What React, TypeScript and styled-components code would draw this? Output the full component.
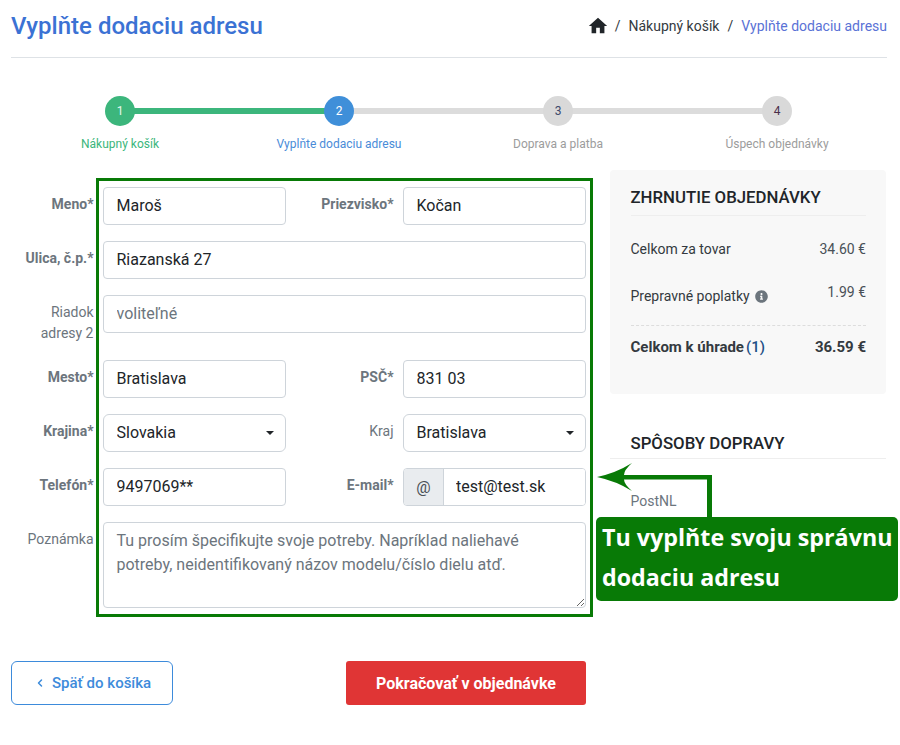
import { ChevronLeft } from 'lucide-react';
import { FaInfoCircle } from 'react-icons/fa';
import { MdHome } from 'react-icons/md';
import styled, { createGlobalStyle } from 'styled-components';

const GlobalStyle = createGlobalStyle`
  html, body {
    margin: 0;
    padding: 0;
    background: #fff;
  }
  body {
    font-family: Roboto, "Liberation Sans", sans-serif;
    color: #212529;
  }
  * {
    box-sizing: border-box;
  }
`;

const Page = styled.div`
  position: relative;
  width: 900px;
  height: 745px;
  padding: 0 13px 0 11px;
  overflow: hidden;
`;

const TopBar = styled.header`
  display: flex;
  justify-content: space-between;
  align-items: center;
  height: 58px;
  padding-bottom: 5px;
  border-bottom: 1px solid #dee2e6;
`;

const Title = styled.h1`
  margin: 0;
  font-size: 24px;
  font-weight: 500;
  color: #3b72d4;
`;

const Crumbs = styled.nav`
  display: flex;
  align-items: center;
  gap: 8px;
  font-size: 14px;
  color: #343a40;
  svg {
    width: 22px;
    height: 22px;
    margin: 0 -2px 0 -3px;
    color: #212529;
  }
`;

const CrumbCurrent = styled.span`
  color: #5a72d6;
`;

const Stepper = styled.ol`
  display: grid;
  grid-template-columns: repeat(4, 219px);
  justify-content: center;
  margin: 38px 0 0;
  padding: 0 1px 0 0;
  list-style: none;
`;

const Step = styled.li<{ $line?: string }>`
  position: relative;
  display: flex;
  flex-direction: column;
  align-items: center;
  gap: 11px;
  &::after {
    content: '';
    display: ${(p) => (p.$line ? 'block' : 'none')};
    position: absolute;
    top: 12px;
    left: 50%;
    width: 100%;
    height: 6px;
    background: ${(p) => p.$line};
  }
`;

const StepDot = styled.span<{ $bg: string; $fg: string }>`
  position: relative;
  z-index: 1;
  display: flex;
  align-items: center;
  justify-content: center;
  width: 30px;
  height: 30px;
  border-radius: 50%;
  background: ${(p) => p.$bg};
  color: ${(p) => p.$fg};
  font-size: 12px;
`;

const StepLabel = styled.span<{ $color: string }>`
  font-size: 12px;
  line-height: 14px;
  color: ${(p) => p.$color};
  white-space: nowrap;
`;

const Columns = styled.div`
  display: grid;
  grid-template-columns: 575px 276px;
  column-gap: 24px;
  margin-top: 19px;
`;

const Form = styled.form`
  display: flex;
  flex-direction: column;
  padding-top: 17px;
`;

const Row = styled.div<{ $gap?: number }>`
  display: grid;
  grid-template-columns: 92px 183px 117px 183px;
  margin-bottom: ${(p) => p.$gap ?? 16}px;
`;

const FieldLabel = styled.label<{ $strong?: boolean }>`
  padding: 7px 9.5px 0 0;
  text-align: right;
  font-size: 14px;
  line-height: 20px;
  font-weight: ${(p) => (p.$strong ? 700 : 400)};
  color: #6c757d;
`;

const TallLabel = styled(FieldLabel)`
  padding-top: 7px;
  line-height: 21px;
  height: 65px;
`;

const Input = styled.input<{ $wide?: boolean }>`
  grid-column: ${(p) => (p.$wide ? 'span 3' : 'auto')};
  width: 100%;
  height: 38px;
  padding: 0 12px 2px 12.5px;
  border: 1px solid #ced4da;
  border-radius: 4px;
  background: #fff;
  font: 400 16px Roboto, sans-serif;
  color: #212529;
  &::placeholder {
    color: #6c757d;
    opacity: 1;
  }
`;

const SelectBox = styled.div`
  position: relative;
  &::after {
    content: '';
    position: absolute;
    top: 17px;
    right: 12px;
    border-top: 4px solid #212529;
    border-left: 4px solid transparent;
    border-right: 4px solid transparent;
  }
`;

const Select = styled.select`
  width: 100%;
  height: 38px;
  padding: 0 12px 2px 12.5px;
  border: 1px solid #ced4da;
  border-radius: 6px;
  background: #fff;
  appearance: none;
  font: 400 16px Roboto, sans-serif;
  color: #212529;
`;

const InputGroup = styled.div`
  display: flex;
  height: 38px;
  border: 1px solid #ced4da;
  border-radius: 4px;
  overflow: hidden;
`;

const GroupAddon = styled.span`
  display: flex;
  align-items: center;
  justify-content: center;
  flex: 0 0 40px;
  border-right: 1px solid #ced4da;
  background: #e9ecef;
  font-size: 16px;
  color: #495057;
`;

const GroupInput = styled.input`
  flex: 1;
  min-width: 0;
  padding: 0 12px 2px;
  border: 0;
  font: 400 16px Roboto, sans-serif;
  color: #212529;
`;

const Note = styled.textarea`
  grid-column: span 3;
  display: block;
  height: 86px;
  padding: 6px 12px 6px 12.5px;
  border: 1px solid #ced4da;
  border-radius: 4px;
  font: 400 16px/24px Roboto, sans-serif;
  color: #212529;
  &::placeholder {
    color: #6c757d;
    opacity: 1;
  }
`;

const Actions = styled.div`
  display: flex;
  justify-content: space-between;
  margin-top: 53px;
`;

const BackButton = styled.button`
  display: flex;
  align-items: center;
  justify-content: flex-start;
  gap: 6px;
  width: 162px;
  height: 44px;
  padding: 0 0 0 22px;
  border: 1px solid #3d8bdb;
  border-radius: 6px;
  background: #fff;
  font: 500 15px Roboto, sans-serif;
  color: #3d8bdb;
  svg {
    width: 12px;
    height: 12px;
  }
`;

const NextButton = styled.button`
  width: 240px;
  height: 44px;
  border: 0;
  border-radius: 3px;
  background: #e03535;
  font: 700 16px Roboto, sans-serif;
  color: #fff;
`;

const Aside = styled.aside`
  display: flex;
  flex-direction: column;
`;

const SummaryCard = styled.section`
  height: 224px;
  padding: 17px 20px 0 20.5px;
  border-radius: 4px;
  background: #f8f8f8;
`;

const SummaryTitle = styled.h2`
  margin: 0;
  padding-bottom: 8px;
  border-bottom: 1px solid #eeeeee;
  font-size: 16.8px;
  line-height: 20px;
  font-weight: 500;
  color: #212529;
`;

const SummaryRow = styled.div<{ $height: number }>`
  display: flex;
  justify-content: space-between;
  height: ${(p) => p.$height}px;
  font-size: 14px;
  line-height: 20px;
  color: #343a40;
`;

const RowText = styled.span<{ $drop?: number }>`
  display: flex;
  align-items: center;
  gap: 5px;
  height: 20px;
  margin-top: ${(p) => p.$drop ?? 0}px;
  svg {
    width: 13px;
    height: 13px;
    color: #6c757d;
  }
`;

const Amount = styled.span<{ $drop?: number }>`
  margin-top: ${(p) => p.$drop ?? 0}px;
  color: #495057;
`;

const TotalRow = styled.div`
  display: flex;
  justify-content: space-between;
  padding-top: 11px;
  border-top: 1px dashed #dddddd;
  font-size: 15px;
  line-height: 20px;
  font-weight: 700;
  color: #343a40;
`;

const TotalCount = styled.span`
  margin-left: 2px;
  font-weight: 500;
  color: #1d4f86;
`;

const ShippingTitle = styled.h2`
  margin: 39px 0 0;
  padding: 0 0 5px 20.5px;
  border-bottom: 1px solid #eeeeee;
  font-size: 16.8px;
  line-height: 20px;
  font-weight: 500;
  color: #212529;
`;

const ShippingName = styled.div`
  margin-top: 32px;
  padding-left: 20.5px;
  font-size: 14px;
  line-height: 20px;
  color: #6c757d;
`;

const Highlight = styled.div`
  position: absolute;
  top: 178px;
  left: 96px;
  width: 497px;
  height: 439px;
  border: 3px solid #087a06;
  pointer-events: none;
`;

const Arrow = styled.svg`
  position: absolute;
  top: 460px;
  left: 596px;
`;

const Callout = styled.div`
  position: absolute;
  top: 517px;
  left: 596px;
  width: 302px;
  height: 84px;
  padding: 0 0 0 6px;
  border-radius: 5px;
  background: #087a06;
  font-family: "Open Sans", sans-serif;
  font-size: 23.25px;
  font-weight: 700;
  line-height: 40px;
  color: #fff;
  white-space: nowrap;
`;

const steps = [
  { n: 1, label: 'Nákupný košík', bg: '#3cb67c', fg: '#e6f6ee', text: '#3cb67c', line: '#3cb67c' },
  { n: 2, label: 'Vyplňte dodaciu adresu', bg: '#3f8fd9', fg: '#fff', text: '#4a8bd8', line: '#dcdcdc' },
  { n: 3, label: 'Doprava a platba', bg: '#d9d9d9', fg: '#3d4a6b', text: '#9c9c9c', line: '#dcdcdc' },
  { n: 4, label: 'Úspech objednávky', bg: '#d9d9d9', fg: '#4a2f4a', text: '#9c9c9c' },
];

const noop = () => {};

export default function App() {
  return (
    <Page>
      <GlobalStyle />
      <TopBar>
        <Title>Vyplňte dodaciu adresu</Title>
        <Crumbs>
          <MdHome />
          <span>/</span>
          <span>Nákupný košík</span>
          <span>/</span>
          <CrumbCurrent>Vyplňte dodaciu adresu</CrumbCurrent>
        </Crumbs>
      </TopBar>

      <Stepper>
        {steps.map((s) => (
          <Step key={s.n} $line={s.line}>
            <StepDot $bg={s.bg} $fg={s.fg}>{s.n}</StepDot>
            <StepLabel $color={s.text}>{s.label}</StepLabel>
          </Step>
        ))}
      </Stepper>

      <Columns>
        <div>
          <Form>
            <Row>
              <FieldLabel $strong>Meno*</FieldLabel>
              <Input value="Maroš" onChange={noop} />
              <FieldLabel $strong>Priezvisko*</FieldLabel>
              <Input value="Kočan" onChange={noop} />
            </Row>
            <Row>
              <FieldLabel $strong>Ulica, č.p.*</FieldLabel>
              <Input $wide value="Riazanská 27" onChange={noop} />
            </Row>
            <Row $gap={0}>
              <TallLabel>Riadok adresy 2</TallLabel>
              <Input $wide placeholder="voliteľné" />
            </Row>
            <Row>
              <FieldLabel $strong>Mesto*</FieldLabel>
              <Input value="Bratislava" onChange={noop} />
              <FieldLabel $strong>PSČ*</FieldLabel>
              <Input value="831 03" onChange={noop} />
            </Row>
            <Row>
              <FieldLabel $strong>Krajina*</FieldLabel>
              <SelectBox>
                <Select defaultValue="Slovakia">
                  <option>Slovakia</option>
                </Select>
              </SelectBox>
              <FieldLabel>Kraj</FieldLabel>
              <SelectBox>
                <Select defaultValue="Bratislava">
                  <option>Bratislava</option>
                </Select>
              </SelectBox>
            </Row>
            <Row>
              <FieldLabel $strong>Telefón*</FieldLabel>
              <Input value="9497069**" onChange={noop} />
              <FieldLabel $strong>E-mail*</FieldLabel>
              <InputGroup>
                <GroupAddon>@</GroupAddon>
                <GroupInput value="test@test.sk" onChange={noop} />
              </InputGroup>
            </Row>
            <Row $gap={0}>
              <FieldLabel>Poznámka</FieldLabel>
              <Note placeholder="Tu prosím špecifikujte svoje potreby. Napríklad naliehavé potreby, neidentifikovaný názov modelu/číslo dielu atď." />
            </Row>
          </Form>
          <Actions>
            <BackButton type="button">
              <ChevronLeft strokeWidth={3} />
              Späť do košíka
            </BackButton>
            <NextButton type="button">Pokračovať v objednávke</NextButton>
          </Actions>
        </div>

        <Aside>
          <SummaryCard>
            <SummaryTitle>ZHRNUTIE OBJEDNÁVKY</SummaryTitle>
            <SummaryRow $height={47}>
              <RowText $drop={23}>Celkom za tovar</RowText>
              <Amount $drop={23}>34.60 €</Amount>
            </SummaryRow>
            <SummaryRow $height={62}>
              <RowText $drop={23}>
                Prepravné poplatky <FaInfoCircle />
              </RowText>
              <Amount $drop={19}>1.99 €</Amount>
            </SummaryRow>
            <TotalRow>
              <span>
                Celkom k úhrade<TotalCount>(1)</TotalCount>
              </span>
              <span>36.59 €</span>
            </TotalRow>
          </SummaryCard>
          <ShippingTitle>SPÔSOBY DOPRAVY</ShippingTitle>
          <ShippingName>PostNL</ShippingName>
        </Aside>
      </Columns>

      <Highlight />
      <Arrow width="120" height="60" viewBox="0 0 120 60">
        <path d="M1 17 Q20 13 36 3 Q28 10 28 15 L116 15 L116 58 L111 58 L111 19.5 L28 19.5 Q28 24 36 31 Q20 21 1 17 Z" fill="#087a06" />
      </Arrow>
      <Callout>
        Tu vyplňte svoju správnu
        <br />
        dodaciu adresu
      </Callout>
    </Page>
  );
}
